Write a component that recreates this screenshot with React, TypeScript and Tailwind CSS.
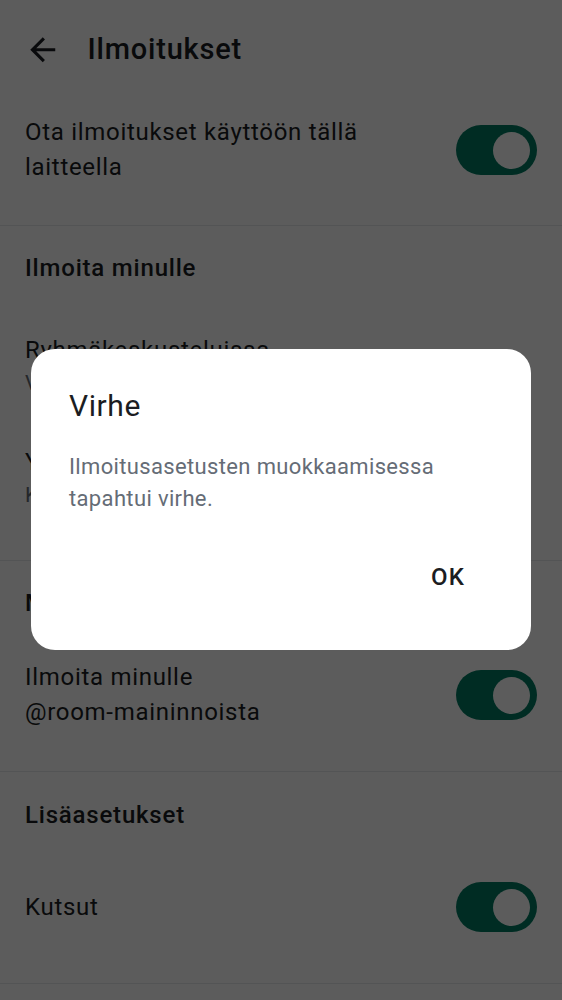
import React from 'react';

const font = { fontFamily: 'Roboto, "Noto Sans", sans-serif' };

const Toggle: React.FC = () => (
  <div className="relative w-[81px] h-[50px] shrink-0 rounded-full bg-[#007a61]">
    <div className="absolute right-[7px] top-[6.5px] w-[37px] h-[37px] rounded-full bg-white" />
  </div>
);

interface RowProps {
  title: React.ReactNode;
  subtitle?: string;
  toggle?: boolean;
  className: string;
}

const Row: React.FC<RowProps> = ({ title, subtitle, toggle, className }) => (
  <div className={`flex items-center pl-[25px] pr-[25px] ${className}`}>
    <div className="flex-1 pr-[40px]">
      <div className="text-[24px] leading-[35px] tracking-[0.7px] text-[#1b1d22]">{title}</div>
      {subtitle && (
        <div className="text-[21px] leading-[31px] tracking-[0.5px] text-[#656c76]">{subtitle}</div>
      )}
    </div>
    {toggle && <Toggle />}
  </div>
);

const SectionTitle: React.FC<{ children: React.ReactNode; className?: string }> = ({ children, className = 'pt-[27px]' }) => (
  <div className={`px-[25px] pb-[27px] text-[24px] leading-[30px] tracking-[0.8px] font-medium text-[#1b1d22] ${className}`}>
    {children}
  </div>
);

export default function App() {
  return (
    <div className="relative w-[562px] h-[1000px] overflow-hidden bg-white" style={font}>
      {/* Toolbar */}
      <div className="h-[100px] flex items-center pl-[24px]">
        <svg viewBox="0 0 24 24" className="w-[37.5px] h-[37.5px] fill-[#1b1d22]">
          <path d="M20 11H7.83l5.59-5.59L12 4l-8 8 8 8 1.41-1.41L7.83 13H20v-2z" />
        </svg>
        <h1 className="ml-[26px] text-[29px] tracking-[0.8px] font-medium text-[#1b1d22]">Ilmoitukset</h1>
      </div>

      <div className="border-b border-[#e6e8eb]">
        <Row title="Ota ilmoitukset käyttöön tällä laitteella" toggle className="pt-[15px] pb-[40px]" />
      </div>

      <div className="border-b border-[#e6e8eb] pb-[26px]">
        <SectionTitle>Ilmoita minulle</SectionTitle>
        <Row title="Ryhmäkeskusteluissa" subtitle="Vain maininnat ja avainsanat" className="py-[23px]" />
        <Row title="Yksityiskeskusteluissa" subtitle="Kaikki viestit" className="py-[23px]" />
      </div>

      <div className="border-b border-[#e6e8eb]">
        <SectionTitle>Maininnat</SectionTitle>
        <Row
          title={
            <>
              Ilmoita minulle <span className="whitespace-nowrap">@room-maininnoista</span>
            </>
          }
          toggle
          className="pt-[15px] pb-[41px]"
        />
      </div>

      <div className="border-b border-[#e6e8eb]">
        <SectionTitle className="pt-[28px]">Lisäasetukset</SectionTitle>
        <Row title="Kutsut" toggle className="pt-[25px] pb-[51px]" />
      </div>

      {/* Dialog */}
      <div className="absolute inset-0 bg-black/[0.64] flex items-center justify-center px-[31px]">
        <div className="w-full bg-white rounded-[24px] pt-[38px] pb-[45px] -translate-y-[1px]">
          <div className="px-[38px]">
            <h2 className="text-[30px] leading-[38px] tracking-[0.6px] text-[#1b1d22]">Virhe</h2>
            <p className="mt-[26px] text-[22px] leading-[32px] tracking-[0.35px] text-[#656c76]">
              Ilmoitusasetusten muokkaamisessa tapahtui virhe.
            </p>
          </div>
          <div className="mt-[34px] flex justify-end pr-[38px]">
            <button className="px-[28px] py-[13px] text-[24px] leading-[30px] tracking-[1.2px] font-medium text-[#1b1d22]">
              OK
            </button>
          </div>
        </div>
      </div>
    </div>
  );
}
